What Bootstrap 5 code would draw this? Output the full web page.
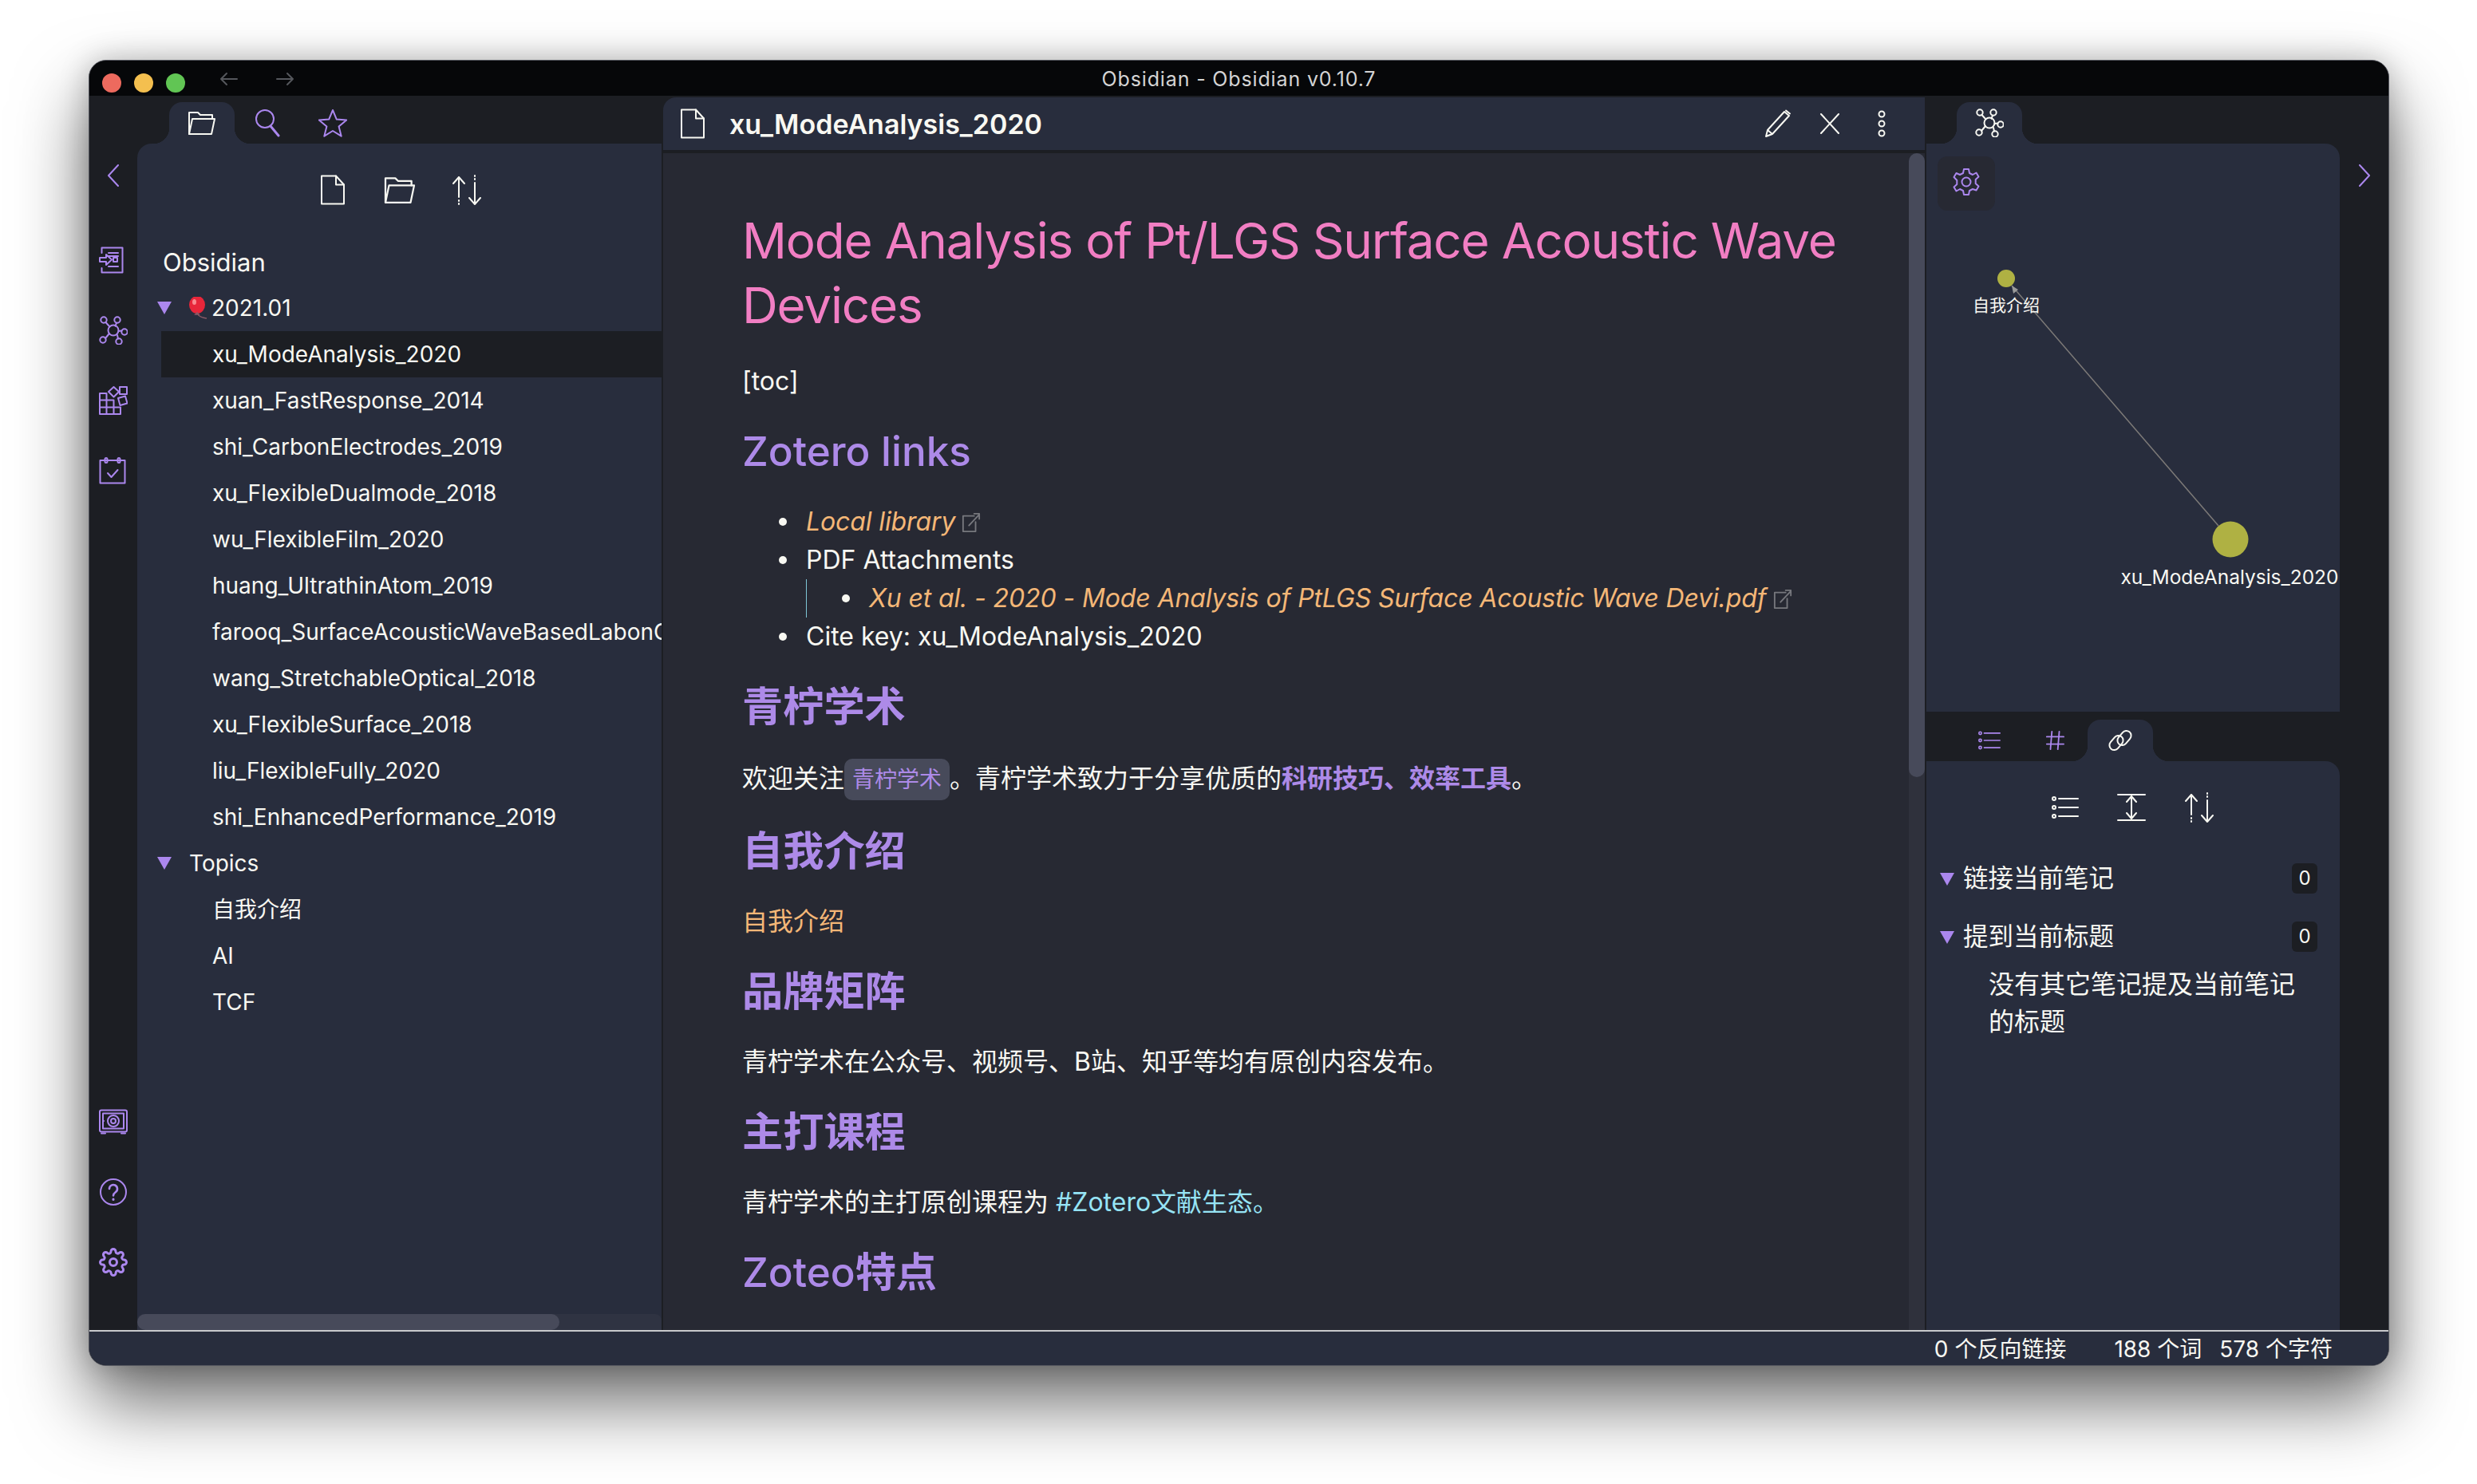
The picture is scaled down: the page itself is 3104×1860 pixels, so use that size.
<!DOCTYPE html>
<html lang="zh">
<head>
  <meta charset="UTF-8">
  <title>Obsidian - Obsidian v0.10.7</title>
  <link href="https://cdn.jsdelivr.net/npm/bootstrap@5.3.0/dist/css/bootstrap.min.css" rel="stylesheet">
  <style>
    :root { --dark:#1c1e23; --pane:#282d3d; --note:#272933; --purple:#ab87ee; --ink:#f8f8f2; }
    html, body { width:3104px; height:1860px; overflow:hidden; }
    body { background:#fff; font-family:"Inter","Noto Sans CJK SC",sans-serif; color:var(--ink); font-size:28px; }
    svg.ico { fill:none; stroke:currentColor; stroke-width:2; stroke-linecap:round; stroke-linejoin:round; flex:none; display:block; }
    .app-win { margin:75px 0 0 111px; width:2883px; height:1637px; border:1px solid #55575f; border-radius:22px; overflow:hidden; background:var(--dark); box-shadow:0 46px 90px rgba(0,0,0,.58), 0 0 36px rgba(0,0,0,.22); }
    .title-strip { height:44px; background:#060709; }
    .tl-dot { width:24px; height:24px; border-radius:50%; }
    .tl-red { background:#ed6a5e; } .tl-yellow { background:#f4bf4f; } .tl-green { background:#61c554; }
    .tl-group { left:16px; top:16px; gap:16px; }
    .nav-arrows { left:163px; top:14px; gap:46px; color:#55575c; }
    .title-text { font-size:25px; letter-spacing:.85px; color:#d4d4d4; line-height:46px; }
    .work-row { height:1548px; }
    .side-ribbon { width:60px; padding:86px 0 67px; color:var(--purple); }
    .right-ribbon { width:61px; padding-top:86px; color:var(--purple); }
    .rib-top { gap:52px; } .rib-bottom { gap:52px; }
    .rib-chevron { margin-bottom:74px; }
    .left-side { width:657px; }
    .right-side { width:518px; margin-left:2px; }
    .tab-row { height:60px; padding-top:8px; }
    .tab-row-left { padding-left:40px; }
    .tab-row-first { padding-left:38px; }
    .tab-cell { width:82px; height:52px; color:var(--purple); }
    .tab-on { background:var(--pane); color:var(--ink); border-radius:16px 16px 0 0; }
    .tab-on::before, .tab-on::after { content:""; position:absolute; bottom:0; width:20px; height:20px; }
    .tab-on::before { left:-20px; background:radial-gradient(circle at 0 0, transparent 20px, var(--pane) 20.5px); }
    .tab-on::after { right:-20px; background:radial-gradient(circle at 100% 0, transparent 20px, var(--pane) 20.5px); }
    .panel-box { background:var(--pane); min-height:0; }
    .panel-l { border-top-left-radius:18px; }
    .panel-r { border-top-right-radius:18px; }
    .files-tools { height:119px; gap:44px; padding-bottom:3px; }
    .tool-cell { width:40px; }
    .vault-name { height:58px; line-height:60px; padding-left:32px; font-size:31px; }
    .tree-row { height:58px; line-height:58px; white-space:nowrap; overflow:hidden; }
    .folder-row { padding-left:65px; }
    .folder-emoji { padding-left:93px; }
    .file-row { margin-left:30px; padding-left:64px; }
    .file-on { background:var(--dark); }
    .tri { width:0; height:0; border-left:9px solid transparent; border-right:9px solid transparent; border-top:16px solid var(--purple); flex:none; }
    .tree-tri { left:25px; top:21px; }
    .balloon { left:65px; top:15px; }
    .bar-track { height:20px; background:#2f3342; border-radius:8px 8px 0 0; flex:none; }
    .bar-thumb { width:529px; height:20px; background:#474a5a; border-radius:10px; }
    .note-col { width:1583px; border-left:2px solid var(--dark); min-height:0; }
    .note-head { height:66px; margin-top:2px; margin-bottom:4px; background:var(--pane); border-top-left-radius:16px; padding-left:21px; }
    .note-name { margin-left:30px; font-size:34px; font-weight:600; }
    .head-btns { margin-right:34px; gap:25px; }
    .head-cell { width:40px; }
    .note-body { background:var(--note); min-height:0; }
    .note-scroll { padding:68px 20px 0 99px; width:1561px; overflow:hidden; font-size:32px; line-height:48px; }
    .note-scroll h1 { font-size:62px; letter-spacing:-1.2px; line-height:81px; font-weight:400; color:#f17ec3; margin:1px 0 31px; }
    .note-scroll h2 { font-size:51.2px; line-height:64px; font-weight:500; color:#ad8ae8; margin:31px 0 33px; }
    .head-cjk { font-weight:700; }
    .note-scroll p { margin:0; }
    .intro-line { padding:2px 0; }
    .note-scroll ul { margin:0; padding-left:80px; list-style:none; }
    .note-scroll li { position:relative; }
    .note-scroll li::before { content:""; position:absolute; left:-34px; top:19px; width:10px; height:10px; border-radius:50%; background:var(--ink); }
    .note-scroll ul ul { padding-left:79px; position:relative; }
    .note-scroll ul ul::before { content:""; position:absolute; left:0; top:0; bottom:0; width:1px; background:#7fc6d6; }
    .ext-link { color:#f4b777; font-style:italic; letter-spacing:-.12px; }
    .int-link { color:#f4b777; }
    svg.ext-mark { display:inline-block; vertical-align:-3px; margin-left:8px; color:#77787e; }
    .key-chip { background:#474a5a; color:#ad8ae8; border-radius:10px; padding:9px 10px; font-size:28px; }
    .mark-words { color:#ad8ae8; font-weight:700; }
    .tag-text { color:#96e4f5; }
    .scroll-rail { width:20px; background:#2f313c; flex:none; border-radius:10px 10px 0 0; }
    .scroll-thumb { height:782px; background:#474a5a; border-radius:10px; }
    .gear-btn { left:14px; top:16px; width:72px; height:68px; padding-bottom:4px; background:#272933; border-radius:12px; color:var(--purple); }
    .graph-box { height:712px; flex:none; }
    .graph-svg text { fill:var(--ink); text-anchor:middle; font-family:"Inter","Noto Sans CJK SC",sans-serif; }
    .tab-row-2 { height:62px; padding-top:10px; padding-left:38px; }
    .links-tools { height:110px; gap:48px; padding-top:6px; }
    .link-group { padding:0 28px 0 46px; height:73px; font-size:31.5px; }
    .link-tri { left:17px; top:30px; width:0; }
    .link-count { width:32px; height:38px; background:var(--dark); border-radius:6px; font-size:24px; }
    .empty-note { padding-left:78px; width:468px; font-size:32px; line-height:47px; }
    .status-strip { height:44px; background:var(--pane); border-top:2px solid #c8c9cc; padding:2px 70px 0 0; font-size:28px; }
    .status-gap { margin-left:60px; } .status-gap2 { margin-left:22px; }
  </style>
</head>
<body>
  <svg width="0" height="0" class="position-absolute">
    <symbol id="i-folder" viewBox="0 0 36 32"><path d="M2 30V3h11l3 3h15v5"/><path d="M2 30L6 11h28l-4 19z"/></symbol>
    <symbol id="i-search" viewBox="0 0 32 36"><circle cx="13" cy="13" r="11"/><path d="M20 22l10 12" stroke-width="3"/></symbol>
    <symbol id="i-star" viewBox="0 0 36 36"><path d="M18 2l4.800 11.600 12.400.9-9.600 8 3.100 12.200L18 28l-10.700 6.700 3.100-12.200-9.600-8 12.400-.9z"/></symbol>
    <symbol id="i-doc" viewBox="0 0 32 38"><path d="M2 1.500h18l10 11V36.500H2z"/><path d="M20 1.500v11h10"/></symbol>
    <symbol id="i-sort" viewBox="0 0 38 38"><path d="M9 3v25M2 11l7-8 7 8"/><path d="M9 32v1M9 36v1"/><path d="M29 10v27M22 29l7 8 7-8"/><path d="M29 1v1M29 5v1"/></symbol>
    <symbol id="i-open" viewBox="0 0 32 36"><path d="M3.500 9V2.500h26v31h-26V28"/><path d="M1 15h8v-4l7 6.500-7 6.500v-4H1z"/><path d="M12 9h12M12 13h12M12 26h12"/><rect x="18" y="15" width="5" height="5"/></symbol>
    <symbol id="i-graph" viewBox="0 0 36 36"><circle cx="18" cy="18" r="6.500"/><circle cx="6" cy="5" r="3.700"/><circle cx="23" cy="5" r="3.700"/><circle cx="32" cy="20" r="3.700"/><circle cx="5" cy="30" r="3.700"/><circle cx="25" cy="32" r="3.700"/><path d="M8.500 8l5 5.500M22 8.700l-1.400 4M24.500 19l4-.5M8 28l5-6M23 24l1 4.500"/></symbol>
    <symbol id="i-blocks" viewBox="0 0 36 36"><path d="M1 9h8.500v26H1zM1 17.500h17.500V35H9.500M1 26.500h26V35H18.500M18.500 26.500V17.500"/><path d="M18.500 1l6.500 6-6.500 6.500L12 7z"/><rect x="26" y="1" width="9" height="9"/><path d="M24 15l9-2.500 2.500 9-9 2.500z"/></symbol>
    <symbol id="i-cal" viewBox="0 0 34 34"><rect x="1.500" y="4" width="31" height="28.500"/><rect x="7.500" y="1" width="3" height="6" rx="1.500"/><rect x="23.500" y="1" width="3" height="6" rx="1.500"/><path d="M11 20l4.500 5 8-9"/></symbol>
    <symbol id="i-vault" viewBox="0 0 36 31"><rect x="1" y="1" width="34" height="27" rx="2"/><rect x="5" y="5" width="26" height="19"/><circle cx="18" cy="14.500" r="7"/><circle cx="18" cy="14.500" r="3"/><path d="M3 30h5M28 30h5M5 14.500h1"/></symbol>
    <symbol id="i-help" viewBox="0 0 36 36"><circle cx="18" cy="18" r="16"/><path d="M13 14a5 5 0 1 1 8 4c-2 1.500-3 2.300-3 4.500" stroke-width="2.600"/><path d="M18 27v.5" stroke-width="3"/></symbol>
    <symbol id="i-gear" viewBox="0 0 24 24"><circle cx="12" cy="12" r="3"/><path d="M19.400 15a1.650 1.650 0 0 0 .33 1.820l.06.06a2 2 0 0 1 0 2.830 2 2 0 0 1-2.830 0l-.06-.06a1.650 1.650 0 0 0-1.820-.33 1.650 1.650 0 0 0-1 1.510V21a2 2 0 0 1-2 2 2 2 0 0 1-2-2v-.09A1.650 1.650 0 0 0 9 19.400a1.650 1.650 0 0 0-1.820.33l-.06.06a2 2 0 0 1-2.830 0 2 2 0 0 1 0-2.830l.06-.06a1.650 1.650 0 0 0 .33-1.820 1.650 1.650 0 0 0-1.510-1H3a2 2 0 0 1-2-2 2 2 0 0 1 2-2h.09A1.650 1.650 0 0 0 4.600 9a1.650 1.650 0 0 0-.33-1.820l-.06-.06a2 2 0 0 1 0-2.830 2 2 0 0 1 2.830 0l.06.06a1.650 1.650 0 0 0 1.820.33H9a1.650 1.650 0 0 0 1-1.510V3a2 2 0 0 1 2-2 2 2 0 0 1 2 2v.09a1.650 1.650 0 0 0 1 1.510 1.650 1.650 0 0 0 1.820-.33l.06-.06a2 2 0 0 1 2.830 0 2 2 0 0 1 0 2.830l-.06.06a1.650 1.650 0 0 0-.33 1.820V9a1.650 1.650 0 0 0 1.510 1H21a2 2 0 0 1 2 2 2 2 0 0 1-2 2h-.09a1.650 1.650 0 0 0-1.510 1z"/></symbol>
    <symbol id="i-cog2" viewBox="0 0 36 36"><circle cx="18" cy="18" r="5.500"/><path d="M15 2h6l1 5 4 2 4.500-2.500 3 5-3.800 3.500v5l3.800 3.500-3 5L26 27l-4 2-1 5h-6l-1-5-4-2-4.500 2.500-3-5L6.300 21v-5L2.500 12l3-5L10 9l4-2z"/></symbol>
    <symbol id="i-pencil" viewBox="0 0 34 36"><path d="M2 34l2-8L25 3l6 5-21 23zM4 26l6 5M2 34l5-2"/><path d="M27 1.500l5 4"/></symbol>
    <symbol id="i-x" viewBox="0 0 26 26"><path d="M2 1l22 24M24 1L2 25"/></symbol>
    <symbol id="i-dots" viewBox="0 0 10 34"><circle cx="5" cy="5" r="3.500"/><circle cx="5" cy="17" r="3.500"/><circle cx="5" cy="29" r="3.500"/></symbol>
    <symbol id="i-list" viewBox="0 0 34 28"><circle cx="3" cy="3" r="2"/><circle cx="3" cy="14" r="2"/><circle cx="3" cy="25" r="2"/><path d="M9 3h24M9 14h24M9 25h24"/></symbol>
    <symbol id="i-hash" viewBox="0 0 26 28"><path d="M9 2L7 26M19 2l-2 24M2 9h23M2 19h23"/></symbol>
    <symbol id="i-link" viewBox="0 0 32 32"><rect x="15" y="3" width="12" height="20" rx="6" transform="rotate(40 21 13)"/><rect x="5" y="9" width="12" height="20" rx="6" transform="rotate(40 11 19)"/></symbol>
    <symbol id="i-expand" viewBox="0 0 36 36"><path d="M1 2h34M1 34h34M18 4v28M12 11l6-7 6 7M12 25l6 7 6-7"/></symbol>
    <symbol id="i-chev-l" viewBox="0 0 16 28"><path d="M14 1L2 14l12 13"/></symbol>
    <symbol id="i-chev-r" viewBox="0 0 16 28"><path d="M2 1l12 13L2 27"/></symbol>
    <symbol id="i-arrow-l" viewBox="0 0 24 18"><path d="M22 9H2M9 2L2 9l7 7"/></symbol>
    <symbol id="i-arrow-r" viewBox="0 0 24 18"><path d="M2 9h20M15 2l7 7-7 7"/></symbol>
    <symbol id="i-ext" viewBox="0 0 26 28"><path d="M17 5H2v21h17V13"/><path d="M10 18L24 3M17 2h7v7"/></symbol>
  </svg>

  <div class="app-win d-flex flex-column">
    <div class="title-strip position-relative text-center title-text flex-none">
      <div class="position-absolute d-flex tl-group"><span class="tl-dot tl-red"></span><span class="tl-dot tl-yellow"></span><span class="tl-dot tl-green"></span></div>
      <div class="position-absolute d-flex nav-arrows">
        <svg class="ico" width="24" height="18"><use href="#i-arrow-l"/></svg>
        <svg class="ico" width="24" height="18"><use href="#i-arrow-r"/></svg>
      </div>
      Obsidian - Obsidian v0.10.7
    </div>

    <div class="work-row d-flex">
      <!-- left ribbon -->
      <div class="side-ribbon d-flex flex-column align-items-center flex-shrink-0">
        <svg class="ico rib-chevron" width="16" height="28"><use href="#i-chev-l"/></svg>
        <div class="d-flex flex-column rib-top">
          <svg class="ico" width="32" height="36"><use href="#i-open"/></svg>
          <svg class="ico" width="36" height="36"><use href="#i-graph"/></svg>
          <svg class="ico" width="36" height="36"><use href="#i-blocks"/></svg>
          <svg class="ico" width="34" height="36"><use href="#i-cal"/></svg>
        </div>
        <div class="d-flex flex-column rib-bottom mt-auto">
          <svg class="ico" width="36" height="36"><use href="#i-vault"/></svg>
          <svg class="ico" width="36" height="36"><use href="#i-help"/></svg>
          <svg class="ico" width="36" height="36"><use href="#i-gear"/></svg>
        </div>
      </div>

      <!-- file explorer -->
      <div class="left-side d-flex flex-column flex-shrink-0">
        <div class="tab-row tab-row-left d-flex flex-shrink-0">
          <div class="tab-cell tab-on position-relative d-flex align-items-center justify-content-center"><svg class="ico" width="36" height="32"><use href="#i-folder"/></svg></div>
          <div class="tab-cell d-flex align-items-center justify-content-center"><svg class="ico" width="32" height="36"><use href="#i-search"/></svg></div>
          <div class="tab-cell d-flex align-items-center justify-content-center"><svg class="ico" width="36" height="36"><use href="#i-star"/></svg></div>
        </div>
        <div class="panel-box panel-l flex-grow-1 d-flex flex-column">
          <div class="files-tools d-flex align-items-center justify-content-center flex-shrink-0">
            <div class="tool-cell d-flex justify-content-center"><svg class="ico" width="32" height="38"><use href="#i-doc"/></svg></div>
            <div class="tool-cell d-flex justify-content-center"><svg class="ico" width="42" height="36"><use href="#i-folder"/></svg></div>
            <div class="tool-cell d-flex justify-content-center"><svg class="ico" width="38" height="38"><use href="#i-sort"/></svg></div>
          </div>
          <div class="vault-name">Obsidian</div>
          <div class="tree-row folder-emoji position-relative">
            <span class="tri position-absolute tree-tri"></span>
            <svg class="position-absolute balloon" width="24" height="28" viewBox="0 0 24 28"><ellipse cx="10" cy="10" rx="10" ry="11" fill="#e8263a"/><ellipse cx="6.500" cy="6.500" rx="2.500" ry="3.500" fill="#f98a8f"/><path d="M10 20l-2 2h4zM11 22c1 2 5 4 11 5" fill="none" stroke="#8a5a66" stroke-width="1.500"/></svg>
            2021.01
          </div>
          <div class="tree-row file-row file-on">xu_ModeAnalysis_2020</div>
          <div class="tree-row file-row">xuan_FastResponse_2014</div>
          <div class="tree-row file-row">shi_CarbonElectrodes_2019</div>
          <div class="tree-row file-row">xu_FlexibleDualmode_2018</div>
          <div class="tree-row file-row">wu_FlexibleFilm_2020</div>
          <div class="tree-row file-row">huang_UltrathinAtom_2019</div>
          <div class="tree-row file-row">farooq_SurfaceAcousticWaveBasedLabonC</div>
          <div class="tree-row file-row">wang_StretchableOptical_2018</div>
          <div class="tree-row file-row">xu_FlexibleSurface_2018</div>
          <div class="tree-row file-row">liu_FlexibleFully_2020</div>
          <div class="tree-row file-row">shi_EnhancedPerformance_2019</div>
          <div class="tree-row folder-row position-relative"><span class="tri position-absolute tree-tri"></span>Topics</div>
          <div class="tree-row file-row">自我介绍</div>
          <div class="tree-row file-row">AI</div>
          <div class="tree-row file-row">TCF</div>
          <div class="bar-track mt-auto"><div class="bar-thumb"></div></div>
        </div>
      </div>

      <!-- note -->
      <div class="note-col d-flex flex-column flex-shrink-0">
        <div class="note-head d-flex align-items-center flex-shrink-0">
          <svg class="ico" width="32" height="38"><use href="#i-doc"/></svg>
          <div class="note-name">xu_ModeAnalysis_2020</div>
          <div class="head-btns d-flex align-items-center ms-auto">
            <div class="head-cell d-flex justify-content-center"><svg class="ico" width="34" height="36"><use href="#i-pencil"/></svg></div>
            <div class="head-cell d-flex justify-content-center"><svg class="ico" width="26" height="26"><use href="#i-x"/></svg></div>
            <div class="head-cell d-flex justify-content-center"><svg class="ico" width="10" height="34"><use href="#i-dots"/></svg></div>
          </div>
        </div>
        <div class="note-body d-flex flex-grow-1">
          <div class="note-scroll flex-shrink-0">
            <h1>Mode Analysis of Pt/LGS Surface Acoustic Wave Devices</h1>
            <p>[toc]</p>
            <h2>Zotero links</h2>
            <ul>
              <li><span class="ext-link">Local library</span><svg class="ico ext-mark" width="24" height="26"><use href="#i-ext"/></svg></li>
              <li>PDF Attachments
                <ul>
                  <li><span class="ext-link">Xu et al. - 2020 - Mode Analysis of PtLGS Surface Acoustic Wave Devi.pdf</span><svg class="ico ext-mark" width="24" height="26"><use href="#i-ext"/></svg></li>
                </ul>
              </li>
              <li>Cite key: xu_ModeAnalysis_2020</li>
            </ul>
            <h2><span class="head-cjk">青柠学术</span></h2>
            <p class="intro-line">欢迎关注<span class="key-chip">青柠学术</span>。青柠学术致力于分享优质的<span class="mark-words">科研技巧、效率工具</span>。</p>
            <h2><span class="head-cjk">自我介绍</span></h2>
            <p class="int-link">自我介绍</p>
            <h2><span class="head-cjk">品牌矩阵</span></h2>
            <p>青柠学术在公众号、视频号、B站、知乎等均有原创内容发布。</p>
            <h2><span class="head-cjk">主打课程</span></h2>
            <p>青柠学术的主打原创课程为 <span class="tag-text">#Zotero文献生态。</span></p>
            <h2>Zoteo<span class="head-cjk">特点</span></h2>
          </div>
          <div class="scroll-rail"><div class="scroll-thumb"></div></div>
        </div>
      </div>

      <!-- right side -->
      <div class="right-side d-flex flex-column flex-shrink-0">
        <div class="tab-row tab-row-first d-flex flex-shrink-0">
          <div class="tab-cell tab-on position-relative d-flex align-items-center justify-content-center"><svg class="ico" width="36" height="36"><use href="#i-graph"/></svg></div>
        </div>
        <div class="panel-box panel-r graph-box position-relative">
          <div class="gear-btn position-absolute d-flex align-items-center justify-content-center"><svg class="ico" width="36" height="36"><use href="#i-cog2"/></svg></div>
          <svg class="graph-svg position-absolute top-0 start-0" width="518" height="712" viewBox="0 0 518 712">
            <line x1="366" y1="479" x2="107" y2="178" stroke="#7d7a78" stroke-width="1.500"/>
            <path d="M107 178l2 10 6-5z" fill="#9a9a9a"/>
            <circle cx="100" cy="169" r="11" fill="#afb143"/>
            <circle cx="381" cy="496" r="22.500" fill="#afb143"/>
            <text x="100" y="210" font-size="21">自我介绍</text>
            <text x="380" y="552" font-size="24.500">xu_ModeAnalysis_2020</text>
          </svg>
        </div>
        <div class="tab-row tab-row-2 d-flex flex-shrink-0">
          <div class="tab-cell d-flex align-items-center justify-content-center"><svg class="ico" width="28" height="24"><use href="#i-list"/></svg></div>
          <div class="tab-cell d-flex align-items-center justify-content-center"><svg class="ico" width="24" height="26"><use href="#i-hash"/></svg></div>
          <div class="tab-cell tab-on position-relative d-flex align-items-center justify-content-center"><svg class="ico" width="32" height="32"><use href="#i-link"/></svg></div>
        </div>
        <div class="panel-box panel-r flex-grow-1">
          <div class="links-tools d-flex align-items-center justify-content-center">
            <svg class="ico" width="34" height="28"><use href="#i-list"/></svg>
            <svg class="ico" width="36" height="36"><use href="#i-expand"/></svg>
            <svg class="ico" width="38" height="38"><use href="#i-sort"/></svg>
          </div>
          <div class="link-group position-relative d-flex align-items-center justify-content-between">
            <span class="tri position-absolute link-tri"></span><span>链接当前笔记</span><span class="link-count d-flex align-items-center justify-content-center">0</span>
          </div>
          <div class="link-group position-relative d-flex align-items-center justify-content-between">
            <span class="tri position-absolute link-tri"></span><span>提到当前标题</span><span class="link-count d-flex align-items-center justify-content-center">0</span>
          </div>
          <div class="empty-note">没有其它笔记提及当前笔记的标题</div>
        </div>
      </div>

      <div class="right-ribbon d-flex flex-column align-items-center flex-shrink-0">
        <svg class="ico" width="16" height="28"><use href="#i-chev-r"/></svg>
      </div>
    </div>

    <div class="status-strip d-flex align-items-center justify-content-end flex-shrink-0">
      <span>0 个反向链接</span><span class="status-gap">188 个词</span><span class="status-gap2">578 个字符</span>
    </div>
  </div>
</body>
</html>
